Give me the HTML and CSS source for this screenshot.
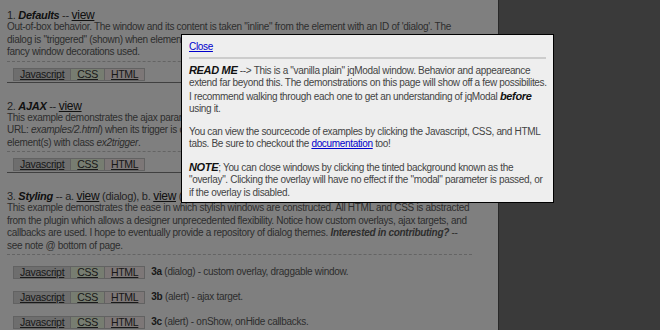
FILE: index.html
```html
<!DOCTYPE html>
<html>
  <head>
    <meta charset="utf-8" />
    <title>jqModal Examples</title>
    <link rel="stylesheet" href="styles.css">
  </head>

  <body>
    <div id="page">
      <div class="example">
        <h2 class="exTitle">1. <b><i>Defaults</i></b> -- <a href="#">view</a></h2>
        <p class="exDesc">Out-of-box behavior. The window and its content is taken "inline" from the element with an ID of 'dialog'. The dialog is "triggered" (shown) when element(s) with class jqModal are clicked. There are no<br />
          fancy window decorations used.</p>
        <ul class="tabs">
          <li class="js"><a href="#">Javascript</a></li>
          <li class="css"><a href="#">CSS</a></li>
          <li class="html"><a href="#">HTML</a></li>
        </ul>
      </div>

      <div class="example">
        <h2 class="exTitle">2. <b><i>AJAX</i></b> -- <a href="#">view</a></h2>
        <p class="exDesc">This example demonstrates the ajax parameter. Window content is loaded via ajax (from the<br />
          URL: <i>examples/2.html</i>) when its trigger is clicked. The trigger is defined as the<br />
          element(s) with class <i>ex2trigger</i>.</p>
        <ul class="tabs">
          <li class="js"><a href="#">Javascript</a></li>
          <li class="css"><a href="#">CSS</a></li>
          <li class="html"><a href="#">HTML</a></li>
        </ul>
      </div>

      <div class="example last">
        <h2 class="exTitle">3. <b><i>Styling</i></b> -- a. <a href="#">view</a> (dialog), b. <a href="#">view</a> (alert), c. <a href="#">view</a> (alert)</h2>
        <p class="exDesc">This example demonstrates the ease in which stylish windows are constructed. All HTML and CSS is abstracted from the plugin which allows a designer unprecedented flexibility. Notice how custom overlays, ajax targets, and callbacks are used. I hope to eventually provide a repository of dialog themes. <b><i>Interested in contributing?</i></b> -- see note @ bottom of page.</p>
        <div class="rows">
          <div class="row">
            <ul class="tabs">
              <li class="js"><a href="#">Javascript</a></li>
              <li class="css"><a href="#">CSS</a></li>
              <li class="html"><a href="#">HTML</a></li>
            </ul>
            <span class="rowText"><b>3a</b> (dialog) - custom overlay, draggable window.</span>
          </div>
          <div class="row">
            <ul class="tabs">
              <li class="js"><a href="#">Javascript</a></li>
              <li class="css"><a href="#">CSS</a></li>
              <li class="html"><a href="#">HTML</a></li>
            </ul>
            <span class="rowText"><b>3b</b> (alert) - ajax target.</span>
          </div>
          <div class="row">
            <ul class="tabs">
              <li class="js"><a href="#">Javascript</a></li>
              <li class="css"><a href="#">CSS</a></li>
              <li class="html"><a href="#">HTML</a></li>
            </ul>
            <span class="rowText"><b>3c</b> (alert) - onShow, onHide callbacks.</span>
          </div>
        </div>
      </div>
    </div>

    <div id="overlay"></div>

    <div id="dialog" class="jqmWindow">
      <a href="#" class="jqmClose">Close</a>
      <hr />
      <p><b><i class="big">READ ME</i></b> --&gt; This is a "vanilla plain" jqModal window. Behavior and appeareance extend far beyond this. The demonstrations on this page will show off a few possibilites. I recommend walking through each one to get an understanding of jqModal <b><i class="big">before</i></b> using it.</p>
      <p>You can view the sourcecode of examples by clicking the Javascript, CSS, and HTML tabs. Be sure to checkout the <a href="#">documentation</a> too!</p>
      <p><b><i class="big">NOTE</i></b>; You can close windows by clicking the tinted background known as the "overlay". Clicking the overlay will have no effect if the "modal" parameter is passed, or if the overlay is disabled.</p>
    </div>
  </body>
</html>
```

FILE: styles.css
```css
* {
  margin: 0;
  padding: 0;
}

body {
  background-color: #747474;
  font-family: "Liberation Sans", Arial, sans-serif;
  font-size: 10px;
  letter-spacing: -0.3px;
  line-height: 12.5px;
  color: #5c5c5c;
  height: 330px;
  overflow: hidden;
}

#page {
  background-color: #fff;
  width: 491px;
  height: 330px;
  padding: 10px 0 0 7px;
  border-right: 1px solid #505050;
}

.example {
  width: 465px;
  border-bottom: 1px solid #808080;
  margin-bottom: 18px;
}

.example.last {
  border-bottom: none;
}

.exTitle {
  font-size: 11px;
  line-height: 11px;
  font-weight: normal;
  color: #4a4a4a;
}

.exTitle b {
  color: #222;
}

.exTitle a {
  color: #222;
  font-size: 12px;
}

.exDesc {
  border-bottom: 1px dashed #c8c8c8;
  padding-bottom: 2px;
}

.tabs {
  list-style: none;
  display: flex;
  margin: 6px 0 1px 6px;
}

.tabs li {
  border: 1px solid #c4c4c4;
  border-left: none;
  padding: 0 6px;
  font-size: 10.5px;
  line-height: 11px;
}

.tabs li:first-child {
  border-left: 1px solid #c4c4c4;
}

.tabs a {
  color: #333;
}

.tabs .js {
  background-color: #dcdcdc;
}

.tabs .css {
  background-color: #eefae2;
}

.tabs .html {
  background-color: #faeeee;
}

.rows {
  padding-top: 5px;
}

.row {
  display: flex;
  align-items: center;
  height: 25px;
}

.row .tabs {
  margin: 0 6px;
}

.rowText b {
  color: #333;
}

#overlay {
  position: fixed;
  left: 0;
  top: 0;
  width: 100%;
  height: 100%;
  background-color: rgba(0, 0, 0, 0.5);
}

.jqmWindow {
  position: absolute;
  left: 181px;
  top: 34px;
  width: 358px;
  height: 161px;
  padding: 6px 6px 0 7px;
  background-color: #eee;
  border: 1px solid #000;
  color: #444;
  letter-spacing: -0.33px;
}

.jqmWindow a {
  color: #0000cc;
}

.jqmWindow hr {
  border: none;
  border-top: 2px solid #ccc;
  margin: 3px 1px 5px 0;
}

.jqmWindow p {
  margin-bottom: 10px;
}

.jqmWindow b {
  color: #111;
}

.jqmWindow .big {
  font-size: 11px;
}
```
